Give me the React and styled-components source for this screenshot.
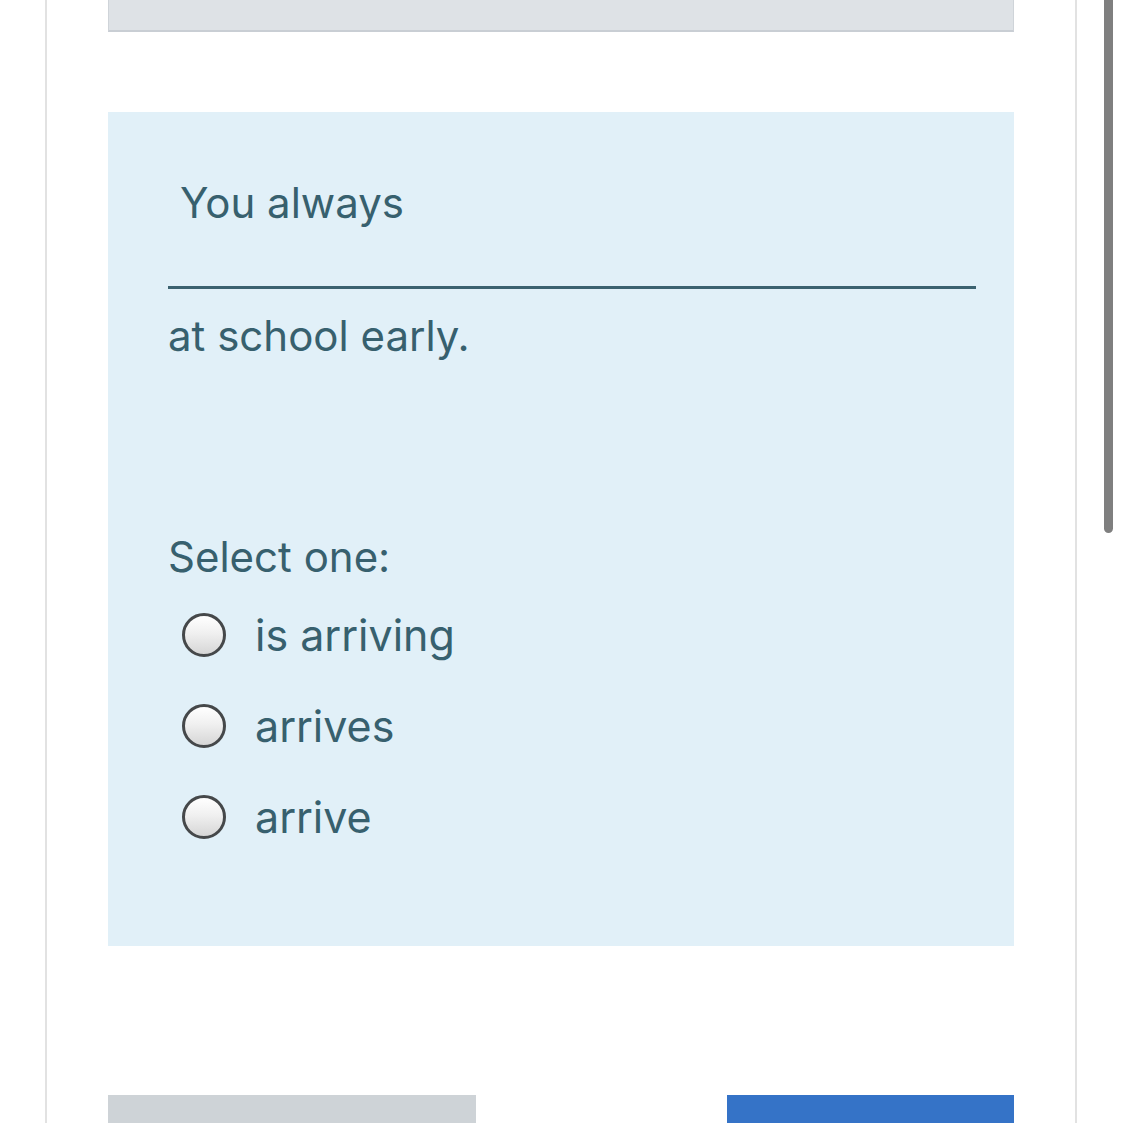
import React from 'react';
import styled, { createGlobalStyle } from 'styled-components';

const options = ['is arriving', 'arrives', 'arrive'];

const App = () => {
  return (
    <>
      <GlobalStyle />
      <Page>
        <Panel>
          <InfoBox />
          <Question>
            <Prompt>
              <Lead>You always</Lead>
              <Blank />
              <Tail>at school early.</Tail>
            </Prompt>
            <Answer>
              <SelectLabel>Select one:</SelectLabel>
              {options.map((opt) => (
                <Option key={opt}>
                  <Radio />
                  <OptionText>{opt}</OptionText>
                </Option>
              ))}
            </Answer>
          </Question>
          <Nav>
            <NavButton $variant='secondary' />
            <NavButton $variant='primary' />
          </Nav>
        </Panel>
        <Scrollbar />
      </Page>
    </>
  );
};

export default App;

// Styled Components
const GlobalStyle = createGlobalStyle`
  html, body {
    margin: 0;
    padding: 0;
    background: #ffffff;
  }
  body {
    font-family: Inter, Roboto, "Liberation Sans", sans-serif;
    overflow: hidden;
  }
`;

const Page = styled.div`
  position: relative;
  width: 1122px;
  height: 1123px;
  overflow: hidden;
  display: flex;
`;

const Panel = styled.div`
  box-sizing: border-box;
  margin-left: 45px;
  width: 1032px;
  height: 1123px;
  border-left: 2px solid #e2e2e2;
  border-right: 2px solid #e2e2e2;
  padding: 0 61px;
  display: flex;
  flex-direction: column;
`;

const InfoBox = styled.div`
  box-sizing: border-box;
  flex-shrink: 0;
  height: 32px;
  background: #dee2e6;
  border: 1px solid #cfd4d9;
  border-top: none;
  border-bottom: 2px solid #c9ced4;
`;

const Question = styled.div`
  box-sizing: border-box;
  flex-shrink: 0;
  margin-top: 80px;
  height: 834px;
  background: #e1f0f8;
  padding: 58px 38px 0 60px;
  color: #37606e;
`;

const Prompt = styled.div`
  font-size: 42px;
  line-height: 66px;
`;

const Lead = styled.div`
  padding-left: 12px;
`;

const Blank = styled.div`
  margin-top: 50px;
  height: 0;
  border-bottom: 3px solid #3b6270;
`;

const Tail = styled.div`
  margin-top: 14px;
`;

const Answer = styled.div`
  margin-top: 155px;
  display: flex;
  flex-direction: column;
`;

const SelectLabel = styled.div`
  font-size: 42px;
  line-height: 66px;
`;

const Option = styled.label`
  display: flex;
  align-items: center;
  height: 92px;
  margin-top: -1px;
  padding-left: 14px;
`;

const Radio = styled.span`
  box-sizing: border-box;
  width: 44px;
  height: 44px;
  border-radius: 50%;
  border: 3px solid #45484a;
  background: linear-gradient(180deg, #ffffff 0%, #f0f0f0 45%, #d6d6d6 100%);
  flex-shrink: 0;
`;

const OptionText = styled.span`
  margin-left: 29px;
  font-size: 43px;
  line-height: 60px;
`;

const Nav = styled.div`
  flex-shrink: 0;
  margin-top: 149px;
  display: flex;
  justify-content: space-between;
`;

const NavButton = styled.div`
  height: 60px;
  width: ${(p) => (p.$variant === 'primary' ? '287px' : '368px')};
  background: ${(p) => (p.$variant === 'primary' ? '#3573c7' : '#ced3d7')};
`;

const Scrollbar = styled.div`
  position: absolute;
  top: 0;
  left: 1104px;
  width: 9px;
  height: 533px;
  background: #7f7f7f;
  border-radius: 0 0 5px 5px;
`;
